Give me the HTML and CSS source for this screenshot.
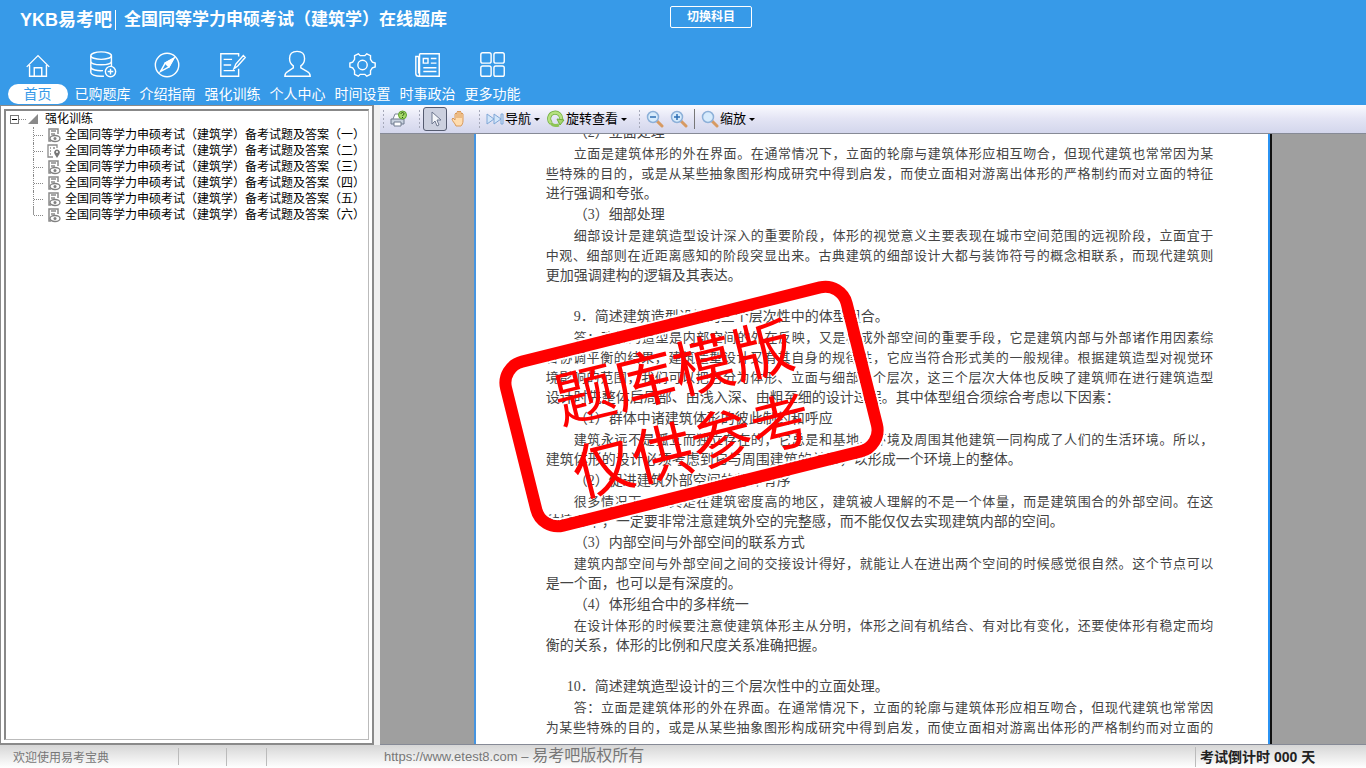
FILE: index.html
```html
<!DOCTYPE html>
<html lang="zh-CN">
<head>
<meta charset="utf-8">
<title>YKB易考吧 全国同等学力申硕考试（建筑学）在线题库</title>
<link rel="stylesheet" href="styles.css">
</head>
<body>
<header class="header">
  <div class="titlebar">
    <h1 class="brand"><span class="logo">YKB易考吧</span><span class="subject">全国同等学力申硕考试（建筑学）在线题库</span></h1>
    <button class="switch" type="button">切换科目</button>
  </div>
  <nav class="nav">
    <a class="nav-item active" href="#"><svg class="nav-icon" viewBox="0 0 32 32"><path d="M4 18 16 6l12 12M7 16v12h18V16M12 28v-9h8v9"/></svg><span>首页</span></a>
    <a class="nav-item" href="#"><svg class="nav-icon" viewBox="0 0 32 32"><ellipse cx="14" cy="6" rx="11" ry="4"/><path d="M3 6v18c0 2 4 4 11 4h3M25 6v11M3 12c0 5 22 5 22 0M3 18c0 3 7 4.500 13 4"/><circle cx="24" cy="23" r="5.500"/><path d="M24 20v6M21 23h6"/></svg><span>已购题库</span></a>
    <a class="nav-item" href="#"><svg class="nav-icon" viewBox="0 0 32 32"><circle cx="15" cy="16" r="12.500"/><path d="m22 9-9 5-5 9 9-5z"/><path class="solid" d="m22 9-9 5 4 4z"/></svg><span>介绍指南</span></a>
    <a class="nav-item" href="#"><svg class="nav-icon" viewBox="0 0 32 32"><path d="M22 7V4H3v24h19v-8M6 10h9M6 16h8M6 22h12M17 20l2-5 8-9 2 2-8 9z"/></svg><span>强化训练</span></a>
    <a class="nav-item" href="#"><svg class="nav-icon" viewBox="0 0 32 32"><path d="M11 17c-3-2-4-5-4-8 0-5 3-7.500 8-7.500S23 4 23 9c0 3-1 6-4 8v2l7 4c2 1 3 3 3 5H2c0-2 1-4 3-5l6-4z"/></svg><span>个人中心</span></a>
    <a class="nav-item" href="#"><svg class="nav-icon" viewBox="0 0 32 32"><path d="m11 4 2 2h5l2-2 4 2v4l2 3 3 1v4l-3 1-2 3v4l-4 2-2-2h-5l-2 2-4-2v-4l-2-3-3-1v-4l3-1 2-3V6z"/><circle cx="15.500" cy="16" r="5"/></svg><span>时间设置</span></a>
    <a class="nav-item" href="#"><svg class="nav-icon" viewBox="0 0 32 32"><path d="M7 4h21v24H6c-2 0-3-1-3-3V7h3v18M7 4v24M11 9h5v5h-5zM19 9h6M19 14h6M11 19h14M11 23h14"/></svg><span>时事政治</span></a>
    <a class="nav-item" href="#"><svg class="nav-icon" viewBox="0 0 32 32"><rect x="3" y="3" width="11" height="11" rx="2"/><rect x="17" y="3" width="11" height="11" rx="2"/><rect x="3" y="17" width="11" height="11" rx="2"/><rect x="17" y="17" width="11" height="11" rx="2"/></svg><span>更多功能</span></a>
  </nav>
</header>

<svg class="defs" aria-hidden="true">
  <symbol id="doc" viewBox="0 0 16 16"><path d="M5 14H3V2h9v5M5 4h5M5 7h4" fill="none" stroke="#8a8a8a" stroke-width="1.500"/><ellipse cx="9" cy="11.500" rx="5" ry="3" fill="#fff" stroke="#808080" stroke-width="1.300"/><circle cx="9" cy="11.500" r="1.500" fill="#808080"/></symbol>
  <symbol id="pin" viewBox="0 0 16 16"><path d="M7 14H2V2h9v3M4 5h1M4 8h1M4 11h1M7 5h2" fill="none" stroke="#8a8a8a" stroke-width="1.300"/><path d="M11 15 8.500 11a2.900 2.900 0 1 1 5 0z" fill="#777"/><circle cx="11" cy="9" r="1" fill="#fff"/></symbol>
  <symbol id="lens" viewBox="0 0 18 18"><path d="m11 11 5 5" stroke="#d79a62" stroke-width="3" stroke-linecap="round"/><circle cx="7" cy="7" r="5.500" fill="#d7ebfc" stroke="#8db0d8" stroke-width="1.500"/></symbol>
</svg>

<main class="main">
  <aside class="sidebar">
    <div class="tree">
      <div class="root"><button class="toggle" type="button" aria-label="折叠"></button><i class="dots"></i><svg class="corner" viewBox="0 0 10 10"><path d="M10 0v10H0z" fill="#8a8a8a"/></svg><span>强化训练</span></div>
      <ul class="branch">
        <li><a href="#"><svg class="leaf"><use href="#doc"/></svg>全国同等学力申硕考试（建筑学）备考试题及答案（一）</a></li>
        <li><a href="#"><svg class="leaf"><use href="#pin"/></svg>全国同等学力申硕考试（建筑学）备考试题及答案（二）</a></li>
        <li><a href="#"><svg class="leaf"><use href="#doc"/></svg>全国同等学力申硕考试（建筑学）备考试题及答案（三）</a></li>
        <li><a href="#"><svg class="leaf"><use href="#doc"/></svg>全国同等学力申硕考试（建筑学）备考试题及答案（四）</a></li>
        <li><a href="#"><svg class="leaf"><use href="#doc"/></svg>全国同等学力申硕考试（建筑学）备考试题及答案（五）</a></li>
        <li><a href="#"><svg class="leaf"><use href="#doc"/></svg>全国同等学力申硕考试（建筑学）备考试题及答案（六）</a></li>
      </ul>
    </div>
  </aside>

  <section class="viewer">
    <div class="toolbar">
      <div class="group">
        <button class="tool" type="button" aria-label="打印"><svg viewBox="0 0 18 18"><path d="M3 9 5 4h6l2 5" fill="#fff" stroke="#7c8797"/><path d="M1 9h13v5H1z" fill="#c9d2df" stroke="#6e7b8e"/><path d="M4 12h7v4H4z" fill="#fff" stroke="#6e7b8e"/><circle cx="12.500" cy="5" r="4" fill="#a5d868" stroke="#5fa22f"/><path d="M11 4c0-2 3-2 3 0 0 1-1.500 1-1.500 2M12.500 7v1" fill="none" stroke="#24510d"/></svg></button>
      </div>
      <div class="group">
        <button class="tool pressed" type="button" aria-label="选择"><svg viewBox="0 0 18 18"><path d="M6 2v12l3-3 2 5 2-1-2-5h4z" fill="#f4f6fa" stroke="#6f7890"/></svg></button>
        <button class="tool" type="button" aria-label="手形"><svg viewBox="0 0 18 18"><path d="M6 16c-1-3-4-5-4-7l1-1 2 2V4l1-1 1 1V2l1-1 1 1 1-1 1 1v2l1-1 1 1v7c0 2-1 4-2 5z" fill="#ffdcae" stroke="#d99a5b"/><path d="M7 4v4M9 2v6M11 4v4" stroke="#d99a5b"/></svg></button>
      </div>
      <div class="group">
        <button class="tool" type="button"><svg viewBox="0 0 18 18"><path d="M1 4v10l7-5zM8 4v10l7-5zM15 4h2v10h-2z" fill="#d3e6fa" stroke="#7fa6d6"/></svg>导航<i class="caret"></i></button>
        <button class="tool" type="button"><svg viewBox="0 0 18 18"><path d="M4 13a6 6 0 1 1 10-3" fill="none" stroke="#6fae3c" stroke-width="4"/><path d="M4 13a6 6 0 1 1 10-3" fill="none" stroke="#b5e07f" stroke-width="2.500"/><path d="m10 9 7 1-4 5z" fill="#a6d66d" stroke="#6fae3c"/><path d="M4 13c2 3 5 3 8 2" fill="none" stroke="#8cc455" stroke-width="3"/></svg>旋转查看<i class="caret"></i></button>
      </div>
      <div class="group">
        <button class="tool" type="button" aria-label="缩小"><svg viewBox="0 0 18 18"><use href="#lens"/><path d="M4 7h6" stroke="#2f6fb4" stroke-width="1.500"/></svg></button>
        <button class="tool" type="button" aria-label="放大"><svg viewBox="0 0 18 18"><use href="#lens"/><path d="M4 7h6M7 4v6" stroke="#2f6fb4" stroke-width="1.500"/></svg></button>
        <i class="rule"></i>
        <button class="tool" type="button"><svg viewBox="0 0 18 18"><use href="#lens"/></svg>缩放<i class="caret"></i></button>
      </div>
    </div>

    <div class="canvas">
      <article class="sheet">
        <div class="text">
          <p>（2）立面处理</p>
          <p><span class="full">立面是建筑体形的外在界面。在通常情况下，立面的轮廓与建筑体形应相互吻合，但现代建筑也常常因为某</span><span class="full">些特殊的目的，或是从某些抽象图形构成研究中得到启发，而使立面相对游离出体形的严格制约而对立面的特征</span><span>进行强调和夸张。</span></p>
          <p>（3）细部处理</p>
          <p><span class="full">细部设计是建筑造型设计深入的重要阶段，体形的视觉意义主要表现在城市空间范围的远视阶段，立面宜于</span><span class="full">中观、细部则在近距离感知的阶段突显出来。古典建筑的细部设计大都与装饰符号的概念相联系，而现代建筑则</span><span>更加强调建构的逻辑及其表达。</span></p>
          <p class="question">9．简述建筑造型设计的三个层次性中的体型组合。</p>
          <p><span class="full">答：建筑的造型是内部空间的外在反映，又是构成外部空间的重要手段，它是建筑内部与外部诸作用因素综</span><span class="full">合协调平衡的结果，建筑造型设计又有其自身的规律性，它应当符合形式美的一般规律。根据建筑造型对视觉环</span><span class="full">境影响的范围，我们可以把它分为体形、立面与细部三个层次，这三个层次大体也反映了建筑师在进行建筑造型</span><span>设计时先整体后局部、由浅入深、由粗至细的设计过程。其中体型组合须综合考虑以下因素：</span></p>
          <p>（1）群体中诸建筑体形的彼此制约和呼应</p>
          <p><span class="full">建筑永远不是孤立而独立存在的，它总是和基地、环境及周围其他建筑一同构成了人们的生活环境。所以，</span><span>建筑体形的设计必须考虑到它与周围建筑的关系，以形成一个环境上的整体。</span></p>
          <p>（2）促进建筑外部空间的整体有序</p>
          <p><span class="full">很多情况下，尤其是在建筑密度高的地区，建筑被人理解的不是一个体量，而是建筑围合的外部空间。在这</span><span>种情况下，一定要非常注意建筑外空的完整感，而不能仅仅去实现建筑内部的空间。</span></p>
          <p>（3）内部空间与外部空间的联系方式</p>
          <p><span class="full">建筑内部空间与外部空间之间的交接设计得好，就能让人在进出两个空间的时候感觉很自然。这个节点可以</span><span>是一个面，也可以是有深度的。</span></p>
          <p>（4）体形组合中的多样统一</p>
          <p><span class="full">在设计体形的时候要注意使建筑体形主从分明，体形之间有机结合、有对比有变化，还要使体形有稳定而均</span><span>衡的关系，体形的比例和尺度关系准确把握。</span></p>
          <p class="question wide">10．简述建筑造型设计的三个层次性中的立面处理。</p>
          <p><span class="full">答：立面是建筑体形的外在界面。在通常情况下，立面的轮廓与建筑体形应相互吻合，但现代建筑也常常因</span><span class="full">为某些特殊的目的，或是从某些抽象图形构成研究中得到启发，而使立面相对游离出体形的严格制约而对立面的</span></p>
        </div>
        <div class="stamp">题库模版<br>仅供参考</div>
      </article>
    </div>
  </section>
</main>

<footer class="status">
  <span class="welcome">欢迎使用易考宝典</span><i class="cell"></i><i class="cell narrow"></i>
  <span class="rights">https://www.etest8.com – <b>易考吧版权所有</b></span>
  <strong class="count">考试倒计时 000 天</strong>
</footer>
</body>
</html>
```
FILE: styles.css
```css
* { box-sizing: border-box; }

body {
  margin: 0;
  height: 100vh;
  display: flex;
  flex-direction: column;
  overflow: hidden;
  background: #f0f0f0;
  font-family: "Liberation Sans", "Noto Sans CJK SC", sans-serif;
  font-size: 12px;
  color: #000;
}

a { color: inherit; text-decoration: none; }
button { font: inherit; color: inherit; background: none; border: 0; padding: 0; }
.defs { position: absolute; width: 0; height: 0; }

/* Header */
.header { background: #379ae8; color: #fff; flex: none; }
.titlebar {
  display: grid;
  grid-template-columns: 1fr auto 1fr;
  align-items: center;
  height: 40px;
  padding-left: 56px;
}
.brand { display: flex; align-items: center; margin: 0 0 0 -36px; font-size: 17px; line-height: 20px; white-space: nowrap; }
.logo { font-size: 18px; font-family: "Liberation Sans", "Noto Sans CJK SC", sans-serif; padding-right: 3px; border-right: 1px solid #fff; }
.subject { padding-left: 8px; }
.switch {
  width: 82px;
  height: 22px;
  margin-bottom: 7px;
  border: 1px solid #fff;
  border-radius: 2px;
  font-weight: bold;
  line-height: 18px;
}
.nav { display: flex; height: 65px; padding: 8px 0 0 5px; }
.nav-item { width: 65px; display: flex; flex-direction: column; align-items: center; gap: 2px; font-size: 14px; line-height: 20px; white-space: nowrap; }
.nav-icon { width: 34px; height: 34px; padding: 2px; fill: none; stroke: #fff; stroke-width: 1.5; }
.nav-icon .solid { fill: #fff; }
.active span { width: 60px; border-radius: 10px; background: #fff; color: #379ae8; text-align: center; }

/* Layout */
.main { flex: 1; min-height: 0; display: flex; gap: 6px; }
.sidebar { width: 374px; flex: none; padding: 3px; background: #fff; border: 1px solid #8a8a8a; border-width: 1px 2px 2px 1px; }
.tree { height: 100%; border: 1px solid #bbb; border-top: 2px solid #888; border-left: 2px solid #888; line-height: 16px; white-space: nowrap; overflow: hidden; }

/* Tree */
.root { display: flex; align-items: center; padding-left: 4px; height: 16px; }
.toggle { width: 9px; height: 9px; border: 1px solid #777; display: flex; align-items: center; justify-content: center; }
.toggle::before { content: ""; width: 5px; height: 1px; background: #000; }
.dots { width: 7px; border-top: 1px dotted #888; margin-right: 2px; }
.corner { width: 10px; height: 10px; margin-right: 7px; }
.branch { list-style: none; margin: 0; padding: 0 0 0 27px; }
.branch li { border-left: 1px dotted #888; height: 16px; }
.branch li:last-child { border-image: linear-gradient(#999 50%, transparent 50%) 1; }
.branch a { display: flex; align-items: center; gap: 3px; }
.branch a::before { content: ""; width: 9px; border-top: 1px dotted #888; }
.leaf { width: 16px; height: 16px; }

/* Viewer */
.viewer { flex: 1; min-width: 0; display: flex; flex-direction: column; }
.toolbar {
  flex: none;
  height: 29px;
  display: flex;
  align-items: center;
  gap: 7px;
  padding-left: 2px;
  background: linear-gradient(#fafaff, #e3e4f4 50%, #d3d6ec);
  border-bottom: 1px solid #868a96;
}
.group { display: flex; align-items: center; }
.group::before { content: ""; width: 3px; height: 20px; margin-right: 2px; background: radial-gradient(circle, #a6a9ba 1px, transparent 1px) 0 0 / 3px 4px; }
.tool { display: flex; align-items: center; height: 24px; padding: 0 3px; font-size: 13px; line-height: 20px; white-space: nowrap; }
.tool svg { width: 18px; height: 18px; margin-right: 1px; }
.tool svg:last-child { margin-right: 0; }
.pressed { padding: 0 2px; border: 1px solid #555b70; border-radius: 3px; background: #ccd0df; }
.caret { border: 3px solid transparent; border-top-color: #000; border-bottom: 0; margin: 0 1px 0 3px; }
.rule { width: 1px; height: 20px; margin: 0 3px; background: #777; }

.canvas { flex: 1; min-height: 0; overflow: hidden; background: #9f9f9f; border-bottom: 1px solid #868a96; }
.sheet {
  position: relative;
  width: 81%;
  height: 100%;
  margin: 0 auto;
  padding: 0 57px 0 70px;
  overflow: hidden;
  background: #fff;
  border-left: 2px solid #4594e0;
  border-right: 2px solid #111;
  box-shadow: inset -2px 0 #2b93f3;
}

/* Full lines are set to the measure; closing lines keep their own length */
.text {
  display: flex;
  flex-direction: column;
  gap: 1px;
  margin-top: -11px;
  font-family: "Liberation Serif", "Noto Sans CJK SC", serif;
  font-size: 14px;
  line-height: 20px;
  color: #444;
  white-space: nowrap;
}
.text p { margin: 0; text-indent: 28px; }
.text span { display: block; }
.text span + span { text-indent: 0; }
.text .full { font-size: 13px; text-align-last: justify; }
.text .question { margin-top: 20px; }
.text .wide { text-indent: 21px; }
.stamp {
  position: absolute;
  left: 34px;
  top: 182px;
  width: 363px;
  height: 181px;
  padding: 6px 18px 0 0;
  border: 12px solid #f00;
  border-radius: 28px;
  box-shadow: 0 0 0 2px #fff, inset 0 0 0 2px #fff;
  color: #f00;
  font-size: 61px;
  line-height: 75px;
  text-align: center;
  white-space: nowrap;
  transform: rotate(-14deg);
}

/* Status bar */
.status {
  flex: none;
  height: 23px;
  display: flex;
  align-items: center;
  background: linear-gradient(#d6d6d6, #fff);
  color: #777;
  white-space: nowrap;
}
.welcome { width: 179px; padding-left: 13px; border-right: 1px solid #bbb; }
.cell { width: 48px; height: 18px; border-right: 1px solid #bbb; }
.narrow { width: 40px; }
.rights { flex: 1; padding-left: 117px; font-size: 13px; line-height: 20px; }
.rights b { font-weight: normal; font-size: 16px; }
.count { width: 171px; padding-left: 4px; border-left: 1px solid #bbb; color: #222; font-size: 14px; line-height: 20px; }
```
